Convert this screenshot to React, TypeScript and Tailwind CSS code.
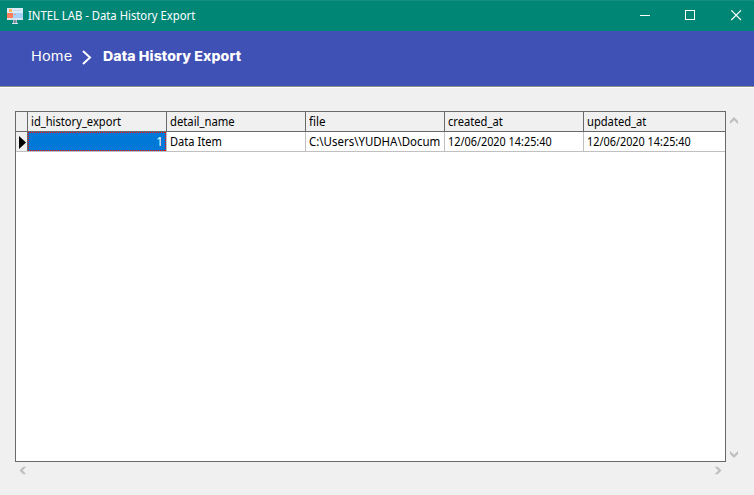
import React from "react";

const columns = [
  { name: "id_history_export", width: "w-[139px]", fit: "scale-x-[0.93]" },
  { name: "detail_name", width: "w-[139px]", fit: "scale-x-[0.94]" },
  { name: "file", width: "w-[139px]", fit: "scale-x-[0.97]" },
  { name: "created_at", width: "w-[139px]", fit: "scale-x-[0.93]" },
  { name: "updated_at", width: "w-[141px]", fit: "scale-x-[0.93]" },
];

function Label({ fit, children }: { fit: string; children: React.ReactNode }) {
  return <span className={`inline-block origin-left whitespace-nowrap ${fit}`}>{children}</span>;
}

function AppIcon() {
  return (
    <svg width="16" height="16" viewBox="0 0 16 16" shapeRendering="crispEdges">
      <rect x="0" y="0" width="16" height="12" fill="#dcebf8" />
      <rect x="2" y="1" width="3" height="3" fill="#f9b45c" />
      <rect x="6" y="2" width="8" height="1" fill="#b9d9f5" />
      <rect x="0" y="5" width="6" height="5" fill="#ff7f5c" />
      <rect x="6" y="5" width="10" height="5" fill="#a9d0f7" />
      <rect x="7" y="6" width="2" height="1" fill="#e2a08c" />
      <rect x="0" y="10" width="16" height="2" fill="#d5e4f1" />
      <rect x="6" y="12" width="4" height="3" fill="#a7b8c7" />
      <rect x="7" y="12" width="2" height="3" fill="#7b8d9e" />
      <rect x="5" y="15" width="6" height="1" fill="#d9e5ec" />
    </svg>
  );
}

function ScrollArrow({ turn }: { turn: string }) {
  return (
    <svg className={turn} width="8" height="7" viewBox="0 0 8 7" fill="#bfbfbf">
      <path d="M4 0 8 4V7L4 3.2 0 7V4Z" />
    </svg>
  );
}

function TitleBar() {
  return (
    <header className="flex h-[31px] items-center border-t border-[#178d7e] bg-[#008675] pl-[7px] text-white">
      <div className="-mt-px"><AppIcon /></div>
      <span className="ml-[5px] text-[12px] leading-4"><Label fit="scale-x-[0.94]">INTEL LAB - Data History Export</Label></span>
      <svg className="-mt-px ml-auto mr-[12px]" width="102" height="11" viewBox="0 0 102 11" fill="none" stroke="#fff">
        <path d="M0 5.5H10M45.5 0.5H54.5V9.5H45.5Z" shapeRendering="crispEdges" />
        <path d="M91.3 0.3 101 10M101 0.3 91.3 10" strokeWidth="1.1" />
      </svg>
    </header>
  );
}

function Breadcrumb() {
  return (
    <nav className="h-[56px] border-b border-[#8d8d88] bg-[#3f51b5] pl-[31px] pt-[16px] text-white">
      <div className="flex h-[18px] items-center whitespace-nowrap font-[family-name:Inter,sans-serif] text-[13px] leading-[18px]">
        <span className="w-[41px] origin-left scale-x-[1.12] tracking-[0.1px]">Home</span>
        <svg className="ml-[10px] mt-[2px]" width="10" height="15" viewBox="0 0 10 15" fill="none" stroke="#fff" strokeWidth="2">
          <path d="M1 1 8 7.5 1 14" />
        </svg>
        <span className="ml-[11px] origin-left scale-x-[1.085] font-extrabold tracking-[0.1px]">Data History Export</span>
      </div>
    </nav>
  );
}

function Grid() {
  return (
    <div className="h-[351px] w-[711px] border border-[#696969] bg-white text-[12px] text-black">
      <div className="flex h-[20px] border-b border-[#696969] bg-[#f0f0f0]">
        <div className="w-[12px] border-r border-[#696969]" />
        {columns.map((c, i) => (
          <div key={c.name} className={`${c.width} ${i < 4 ? "border-r border-[#696969]" : ""} overflow-hidden pl-[3px] leading-[19px]`}>
            <Label fit={c.fit}>{c.name}</Label>
          </div>
        ))}
      </div>
      <div className="flex h-[20px] border-b border-[#c0c0c0] leading-[19px]">
        <div className="flex w-[12px] items-center border-r border-[#696969] bg-[#f0f0f0] pl-[3px] pt-[2px]">
          <svg width="7" height="13" viewBox="0 0 7 13">
            <path d="M0 0 7 6.5 0 13Z" fill="#000" />
          </svg>
        </div>
        <div className="w-[139px] border-r border-[#c0c0c0]">
          <div className="relative h-[19px] bg-[#0078d7] pr-[3px] text-right leading-[19px] text-white">
            1
            <svg className="absolute inset-0" width="138" height="19" fill="none" stroke="#ff0000" strokeDasharray="1 1" shapeRendering="crispEdges">
              <path d="M0 0.5H138M0 18.5H138M0.5 0V19M137.5 0V19" />
            </svg>
          </div>
        </div>
        <div className="w-[139px] border-r border-[#c0c0c0] pl-[3px]"><Label fit="scale-x-[0.925]">Data Item</Label></div>
        <div className="w-[139px] overflow-hidden border-r border-[#c0c0c0] pl-[3px]"><Label fit="scale-x-[0.955]">C:\Users\YUDHA\Docum</Label></div>
        <div className="w-[139px] border-r border-[#c0c0c0] pl-[3px]"><Label fit="scale-x-[0.905]">12/06/2020 14:25:40</Label></div>
        <div className="w-[141px] pl-[3px]"><Label fit="scale-x-[0.905]">12/06/2020 14:25:40</Label></div>
      </div>
    </div>
  );
}

export default function App() {
  return (
    <div className="h-[495px] w-[754px] overflow-hidden bg-[#f0f0f0] font-[family-name:Noto_Sans,sans-serif]">
      <TitleBar />
      <Breadcrumb />
      <main className="border-t border-white pl-[15px] pt-[23px]">
        <div className="flex">
          <Grid />
          <div className="flex flex-col justify-between pb-[4px] pl-[4px] pt-[6px]">
            <ScrollArrow turn="" />
            <ScrollArrow turn="rotate-180" />
          </div>
        </div>
        <div className="flex w-[707px] justify-between pl-[4px] pt-[5px]">
          <ScrollArrow turn="-rotate-90" />
          <ScrollArrow turn="rotate-90" />
        </div>
      </main>
    </div>
  );
}
